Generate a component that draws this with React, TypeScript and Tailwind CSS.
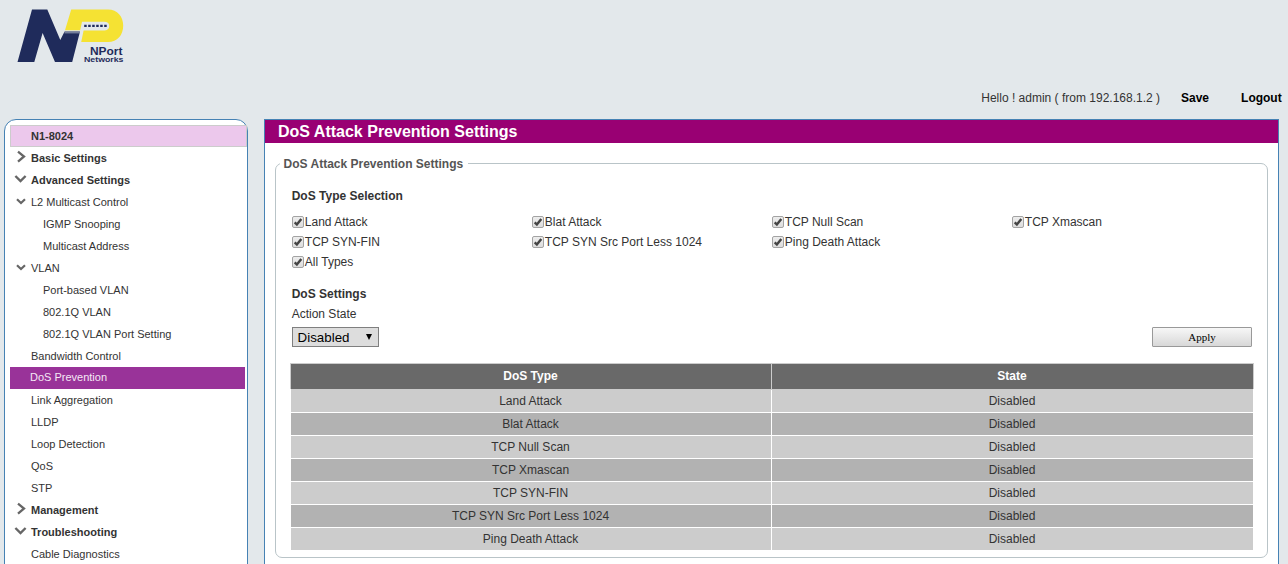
import React from 'react';

type Arrow = 'right' | 'down' | 'small';
type Item = { label: string; level: 0 | 1 | 2; arrow?: Arrow; active?: boolean };

const menu: Item[] = [
  { label: 'Basic Settings', level: 0, arrow: 'right' },
  { label: 'Advanced Settings', level: 0, arrow: 'down' },
  { label: 'L2 Multicast Control', level: 1, arrow: 'small' },
  { label: 'IGMP Snooping', level: 2 },
  { label: 'Multicast Address', level: 2 },
  { label: 'VLAN', level: 1, arrow: 'small' },
  { label: 'Port-based VLAN', level: 2 },
  { label: '802.1Q VLAN', level: 2 },
  { label: '802.1Q VLAN Port Setting', level: 2 },
  { label: 'Bandwidth Control', level: 1 },
  { label: 'DoS Prevention', level: 1, active: true },
  { label: 'Link Aggregation', level: 1 },
  { label: 'LLDP', level: 1 },
  { label: 'Loop Detection', level: 1 },
  { label: 'QoS', level: 1 },
  { label: 'STP', level: 1 },
  { label: 'Management', level: 0, arrow: 'right' },
  { label: 'Troubleshooting', level: 0, arrow: 'down' },
  { label: 'Cable Diagnostics', level: 1 },
];

const attacks = [
  'Land Attack',
  'Blat Attack',
  'TCP Null Scan',
  'TCP Xmascan',
  'TCP SYN-FIN',
  'TCP SYN Src Port Less 1024',
  'Ping Death Attack',
];

function Logo() {
  return (
    <svg width="140" height="75" viewBox="0 0 140 75" className="block" fontFamily="Liberation Sans, sans-serif">
      <path d="M32 9.5H47.3L60.3 40L64.6 31.6H80L72.2 62H55L42.6 33L34.3 62H17.5Z" fill="#1f2b5b" />
      <path
        d="M71.2 9.5H108C117.500 9.500 123.200 16.500 123.200 25.500C123.200 35 117.500 42 108 42H81.200L83.600 30.600H103C107.400 30.600 109.200 28.800 109.200 26C109.200 23 107.400 21.700 104 21.700H82L80.200 30.300H65Z"
        fill="#f5e233"
      />
      <path d="M64.500 32.800H79.600" stroke="#b8c0cf" strokeWidth="0.8" />
      <path d="M84.200 25.900H107" stroke="#1f2b5b" strokeWidth="2.400" strokeDasharray="2.500 1.500" />
      <text x="90" y="54.600" fontSize="11.200" fontWeight="bold" fill="#1f2b5b" textLength="32.500" lengthAdjust="spacingAndGlyphs">
        NPort
      </text>
      <text x="84" y="61.600" fontSize="7.800" fontWeight="bold" fill="#1f2b5b" textLength="39.500" lengthAdjust="spacingAndGlyphs">
        Networks
      </text>
    </svg>
  );
}

function MenuArrow({ kind }: { kind?: Arrow }) {
  return (
    <svg width="21" height="22" viewBox="0 0 21 22" className="block shrink-0" fill="none" stroke="#666">
      {kind === 'right' && <path d="M8 4.700L14 9.500L8 14.600" strokeWidth="2.300" />}
      {kind === 'down' && <path d="M5.400 7L10.500 12L15.600 7" strokeWidth="2.400" />}
      {kind === 'small' && <path d="M7 8.200L11 12L15 8.200" strokeWidth="2.200" />}
    </svg>
  );
}

function MenuRow({ item }: { item: Item }) {
  if (item.active) {
    return (
      <div className="h-[22px] w-[235px] bg-[#993399] pl-5 leading-[20px] text-[#f5e8f5]">{item.label}</div>
    );
  }
  return (
    <div className={item.level === 0 ? 'flex h-[22px] font-bold' : 'flex h-[22px]'}>
      <MenuArrow kind={item.arrow} />
      <span className={item.level === 2 ? 'pl-3 leading-[22px]' : 'leading-[22px]'}>{item.label}</span>
    </div>
  );
}

function Check({ label }: { label: string }) {
  return (
    <label className="flex h-5 items-center">
      <svg width="12" height="12" viewBox="0 0 12 12" className="block shrink-0">
        <defs>
          <linearGradient id="box" x1="0" y1="0" x2="0" y2="1">
            <stop offset="0" stopColor="#eee" />
            <stop offset="1" stopColor="#dcdcdc" />
          </linearGradient>
        </defs>
        <rect x="0.500" y="0.500" width="11" height="11" rx="1.500" fill="url(#box)" stroke="#a3a3a3" />
        <path d="M2.700 6.300L4.900 8.500L9.300 3" fill="none" stroke="#444" strokeWidth="2.400" />
      </svg>
      <span className="pl-[0.8px]">{label}</span>
    </label>
  );
}

export default function App() {
  return (
    <div className="flex h-[564px] w-full flex-col overflow-hidden bg-[#e3e8eb] font-['Liberation_Sans',Arial,sans-serif] text-xs text-[#333]">
      <header className="flex h-[119px] shrink-0 flex-col">
        <Logo />
        <div className="flex h-11 items-center justify-end pr-[6.3px] pt-[2px]">
          <span>Hello ! admin ( from 192.168.1.2 )</span>
          <b className="ml-[21px] text-black">Save</b>
          <b className="ml-8 text-black">Logout</b>
        </div>
      </header>

      <div className="flex min-h-0 flex-1">
        <nav className="ml-1 h-[480px] w-[244px] shrink-0 rounded-t-[12px] border border-[#4682b4] bg-white pl-[5px] pt-[5px] text-[11px]">
          <div className="h-[22px] border border-[#ccc] bg-[#ecc8ec] pl-5 font-bold leading-[21px]">N1-8024</div>
          {menu.map((item) => (
            <MenuRow key={item.label} item={item} />
          ))}
        </nav>

        <main className="ml-4 h-[480px] w-[1015px] shrink-0 border border-[#4682b4] bg-white">
          <h1 className="h-[23px] bg-[#990073] pl-[13px] text-base font-bold leading-[23px] text-white">
            DoS Attack Prevention Settings
          </h1>
          <section className="relative ml-[10px] mt-5 h-[395px] w-[993px] rounded-[7px] border border-[#b9c4c8] px-[15px] pt-[22px]">
            <span className="absolute -top-[9px] left-1 bg-white pl-[3.6px] pr-[4.6px] font-bold leading-[18px] text-[#555]">
              DoS Attack Prevention Settings
            </span>
            <b className="block h-5 pl-[0.7px] leading-5">DoS Type Selection</b>
            <div className="mt-[6px] grid grid-cols-[240px_240px_240px_240px] pl-[1px]">
              {attacks.map((name) => (
                <Check key={name} label={name} />
              ))}
              <div />
              <Check label="All Types" />
            </div>
            <b className="mt-3 block h-5 pl-[0.7px] leading-5">DoS Settings</b>
            <div className="h-5 pl-[0.7px] leading-5">Action State</div>
            <div className="mt-[3px] flex items-center justify-between pl-[1px]">
              <button className="flex h-5 w-[87px] items-center justify-between border border-[#7f7f7f] bg-[#ddd] pl-[4.6px] pr-[5px] text-[13.333px] text-black">
                <span className="pt-px">Disabled</span>
                <svg width="8" height="8" viewBox="0 0 8 8" className="block">
                  <path d="M1 1H7L4 7Z" fill="#000" />
                </svg>
              </button>
              <button className="h-5 w-[100px] rounded-[1px] border border-[#999] bg-linear-to-b from-[#f7f7f7] to-[#d8d8d8] font-['Liberation_Serif',serif] text-[11px] text-black">
                Apply
              </button>
            </div>
            <div className="-ml-px mt-4 w-[964px]">
              <div className="grid h-[26px] grid-cols-[481px_1fr] border border-b-0 border-[#ccc] bg-[#696969] text-center font-bold leading-[25px] text-white">
                <div className="border-r border-[#ccc] pr-[1px]">DoS Type</div>
                <div className="pr-[1px]">State</div>
              </div>
              <div className="mx-px border-t border-[#ccc]">
                <div className="grid gap-px">
                  {attacks.map((name, i) => (
                    <div
                      key={name}
                      className={
                        i % 2
                          ? 'grid h-[22px] grid-cols-[481px_1fr] bg-[#b2b2b2] text-center leading-[22px]'
                          : 'grid h-[22px] grid-cols-[481px_1fr] bg-[#ccc] text-center leading-[22px]'
                      }
                    >
                      <div className="border-r border-white pr-[1px]">{name}</div>
                      <div className="pr-[1px]">Disabled</div>
                    </div>
                  ))}
                </div>
              </div>
            </div>
          </section>
        </main>
      </div>
    </div>
  );
}
